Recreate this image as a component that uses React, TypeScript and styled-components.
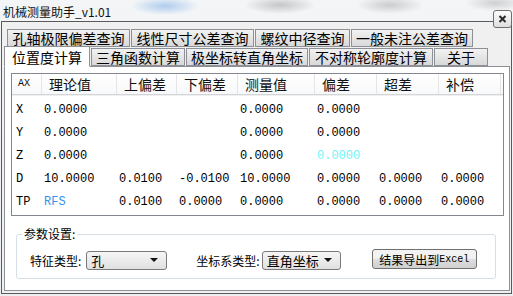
import styled, { createGlobalStyle } from 'styled-components';

const GlobalStyle = createGlobalStyle`
  html, body {
    margin: 0;
    padding: 0;
  }
  body {
    width: 513px;
    height: 296px;
    overflow: hidden;
    font-family: 'Noto Sans CJK SC', 'Liberation Sans', sans-serif;
    color: #000;
    background:
      radial-gradient(ellipse 34px 9px at 165px 6px, rgba(120, 170, 230, 0.55), transparent),
      radial-gradient(ellipse 36px 9px at 280px 5px, rgba(110, 110, 110, 0.35), transparent),
      radial-gradient(ellipse 34px 9px at 390px 5px, rgba(110, 110, 110, 0.3), transparent),
      radial-gradient(ellipse 30px 8px at 495px 3px, rgba(120, 120, 120, 0.3), transparent),
      linear-gradient(#f3f5f7, #eceff2);
  }
`;

const CJK = "'Noto Sans CJK SC', 'Liberation Sans', sans-serif";
const MONO = "'Liberation Mono', 'DejaVu Sans Mono', monospace";

/** 전체 화면 */
const Screen = styled.div`
  position: relative;
  display: flex;
  flex-direction: column;
  width: 513px;
  height: 296px;
`;

const TitleBar = styled.div`
  height: 21px;
  display: flex;
  align-items: center;
  padding-left: 3px;
  font-size: 12px;
  line-height: 14px;
  color: #111;
  box-sizing: border-box;
  padding-top: 2px;
`;

const CloseButton = styled.div`
  position: absolute;
  left: 493px;
  top: 10px;
  width: 19px;
  height: 18px;
  box-sizing: border-box;
  border: 1px solid #6e6e6e;
  border-radius: 3px;
  background: linear-gradient(#fdfdfd, #dedede);
  display: flex;
  align-items: center;
  justify-content: center;
`;

/** 창 본체 */
const Frame = styled.div`
  margin: 0 1px 2px 1px;
  flex: 1;
  border: 1px solid #5a5a5a;
  background: #f0f0f0;
  display: flex;
  flex-direction: column;
  padding-top: 6px;
  box-sizing: border-box;
`;

const TabRow = styled.div<{ $pad: number }>`
  display: flex;
  align-items: flex-end;
  gap: 1px;
  padding-left: ${(p) => p.$pad}px;
  height: 19px;
`;

const Tab = styled.div<{ $w: number; $active?: boolean }>`
  width: ${(p) => p.$w}px;
  height: ${(p) => (p.$active ? 21 : 18)}px;
  box-sizing: border-box;
  border: 1px solid #8d9097;
  border-bottom: ${(p) => (p.$active ? '1px solid #fff' : '1px solid #8d9097')};
  background: ${(p) => (p.$active ? '#fff' : 'linear-gradient(#f2f2f2, #e4e4e4 55%, #d9d9d9)')};
  font-family: ${CJK};
  font-size: 14px;
  line-height: 16px;
  text-align: center;
  white-space: nowrap;
  margin-bottom: ${(p) => (p.$active ? -1 : 0)}px;
  position: relative;
  z-index: ${(p) => (p.$active ? 2 : 1)};
  padding-top: ${(p) => (p.$active ? 2 : 0)}px;
`;

const Panel = styled.div`
  margin: 0 1px 2px 2px;
  flex: 1;
  border: 1px solid #8d9097;
  background: #fff;
  display: flex;
  flex-direction: column;
  padding: 6px 5px 0 6px;
`;

/** 리스트 */
const ListView = styled.div`
  height: 143px;
  flex-shrink: 0;
  box-sizing: border-box;
  border: 1px solid #828790;
  background: #fff;
`;

const COLS = '30px 75px 60px 61px 77px 62px 62px 62px';

const HeaderRow = styled.div`
  display: grid;
  grid-template-columns: ${COLS};
  height: 20px;
  background: linear-gradient(#ffffff, #f7f8f9);
  border-bottom: 1px solid #d5d5d5;
  box-shadow: 0 1px 0 #eef0f2;
`;

const HeaderCell = styled.div<{ $small?: boolean }>`
  border-right: 1px solid #e5e5e5;
  padding-left: ${(p) => (p.$small ? 6 : 7)}px;
  font-family: ${(p) => (p.$small ? MONO : CJK)};
  font-size: ${(p) => (p.$small ? 10 : 14)}px;
  line-height: 20px;
  white-space: nowrap;
  color: #111;
`;

const Body = styled.div`
  padding-top: 3px;
`;

const DataRow = styled.div`
  display: grid;
  grid-template-columns: ${COLS};
  height: 23px;
  align-items: center;
`;

const Cell = styled.div<{ $color?: string; $pad?: number }>`
  padding-left: ${(p) => p.$pad ?? 2}px;
  font-family: ${MONO};
  font-size: 12px;
  color: ${(p) => p.$color ?? '#000'};
  white-space: nowrap;
`;

/** 파라미터 설정 */
const Group = styled.fieldset`
  margin: 11px 8px 0 5px;
  border: 1px solid #d5dfe5;
  border-radius: 3px;
  padding: 9px 5px 0 13px;
  height: 52px;
  box-sizing: border-box;
  flex-shrink: 0;
  legend {
    font-family: ${CJK};
    font-size: 12px;
    line-height: 14px;
    padding: 0 2px;
    margin-left: -8px;
  }
`;

const ControlRow = styled.div`
  display: flex;
  align-items: center;
  height: 20px;
`;

const Label = styled.span<{ $ml?: number }>`
  font-family: ${CJK};
  font-size: 12px;
  margin-left: ${(p) => p.$ml ?? 0}px;
  white-space: nowrap;
`;

const Select = styled.div<{ $w: number; $ml: number }>`
  width: ${(p) => p.$w}px;
  height: 19px;
  margin-left: ${(p) => p.$ml}px;
  box-sizing: border-box;
  border: 1px solid #7a7a7a;
  border-radius: 3px;
  background: linear-gradient(#f6f6f6, #e0e0e0);
  display: flex;
  align-items: center;
  justify-content: space-between;
  padding: 0 8px 0 4px;
  font-family: ${CJK};
  font-size: 13px;
`;

const Arrow = styled.span`
  width: 0;
  height: 0;
  border-left: 4px solid transparent;
  border-right: 4px solid transparent;
  border-top: 4px solid #111;
`;

const Button = styled.div<{ $ml: number }>`
  width: 105px;
  height: 20px;
  margin-left: ${(p) => p.$ml}px;
  margin-top: -2px;
  box-sizing: border-box;
  border: 1px solid #707070;
  border-radius: 3px;
  background: linear-gradient(#f2f2f2 45%, #dcdcdc 55%, #d0d0d0);
  display: flex;
  align-items: center;
  justify-content: center;
  font-family: ${CJK};
  font-size: 12px;
  white-space: nowrap;
  span {
    font-family: ${MONO};
    font-size: 10px;
  }
`;

const topTabs = [
  { label: '孔轴极限偏差查询', w: 123 },
  { label: '线性尺寸公差查询', w: 123 },
  { label: '螺纹中径查询', w: 95 },
  { label: '一般未注公差查询', w: 122 },
];

const bottomTabs = [
  { label: '位置度计算', w: 86, active: true },
  { label: '三角函数计算', w: 94 },
  { label: '极坐标转直角坐标', w: 122 },
  { label: '不对称轮廓度计算', w: 124 },
  { label: '关于', w: 54 },
];

const headers = ['理论值', '上偏差', '下偏差', '测量值', '偏差', '超差', '补偿'];

type Row = { ax: string; values: string[]; colors?: Record<number, string> };

const rows: Row[] = [
  { ax: 'X', values: ['0.0000', '', '', '0.0000', '0.0000', '', ''] },
  { ax: 'Y', values: ['0.0000', '', '', '0.0000', '0.0000', '', ''] },
  { ax: 'Z', values: ['0.0000', '', '', '0.0000', '0.0000', '', ''], colors: { 4: '#6ff5f8' } },
  { ax: 'D', values: ['10.0000', '0.0100', '-0.0100', '10.0000', '0.0000', '0.0000', '0.0000'] },
  { ax: 'TP', values: ['RFS', '0.0100', '0.0000', '0.0000', '0.0000', '0.0000', '0.0000'], colors: { 0: '#3592ea' } },
];

function App() {
  return (
    <Screen>
      <GlobalStyle />
      <TitleBar>机械测量助手_v1.01</TitleBar>
      <CloseButton>
        <svg width="9" height="8" viewBox="0 0 9 8">
          <path d="M1.5 1 L7.5 7 M7.5 1 L1.5 7" stroke="#2b2b2b" strokeWidth="2" fill="none" />
        </svg>
      </CloseButton>
      <Frame>
        <TabRow $pad={5}>
          {topTabs.map((t) => (
            <Tab key={t.label} $w={t.w}>
              {t.label}
            </Tab>
          ))}
        </TabRow>
        <TabRow $pad={2}>
          {bottomTabs.map((t) => (
            <Tab key={t.label} $w={t.w} $active={t.active}>
              {t.label}
            </Tab>
          ))}
        </TabRow>
        <Panel>
          <ListView>
            <HeaderRow>
              <HeaderCell $small>AX</HeaderCell>
              {headers.map((h) => (
                <HeaderCell key={h}>{h}</HeaderCell>
              ))}
            </HeaderRow>
            <Body>
              {rows.map((r) => (
                <DataRow key={r.ax}>
                  <Cell $pad={4}>{r.ax}</Cell>
                  {r.values.map((v, i) => (
                    <Cell key={i} $color={r.colors?.[i]}>
                      {v}
                    </Cell>
                  ))}
                </DataRow>
              ))}
            </Body>
          </ListView>
          <Group>
            <legend>参数设置:</legend>
            <ControlRow>
              <Label>特征类型:</Label>
              <Select $w={81} $ml={5}>
                孔<Arrow />
              </Select>
              <Label $ml={29}>坐标系类型:</Label>
              <Select $w={79} $ml={2}>
                直角坐标<Arrow />
              </Select>
              <Button $ml={31}>
                结果导出到<span>Excel</span>
              </Button>
            </ControlRow>
          </Group>
        </Panel>
      </Frame>
    </Screen>
  );
}

export default App;
